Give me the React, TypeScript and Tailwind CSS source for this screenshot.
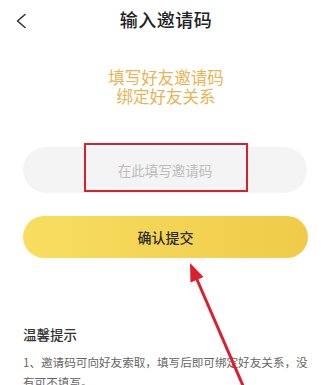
import React from 'react';

const font = { fontFamily: '"Noto Sans CJK SC", "Noto Sans", sans-serif' };

export default function App() {
  return (
    <div className="relative w-[324px] h-[385px] overflow-hidden bg-white" style={font}>
      {/* Header */}
      <div className="relative flex items-center justify-center h-[38px]">
        <button className="absolute left-[13px] top-[11px] p-0.5">
          <svg width="12" height="16" viewBox="0 0 12 16" fill="none">
            <path d="M10 1.5 L2.5 8 L10 14.5" stroke="#333" strokeWidth="1.6" strokeLinecap="round" strokeLinejoin="round" />
          </svg>
        </button>
        <h1 className="ml-[8px] text-[18px] font-medium text-[#222] tracking-[0.5px]">输入邀请码</h1>
      </div>

      {/* Intro */}
      <div className="mt-[30px] ml-[8px] text-center text-[16.5px] leading-[19px] text-[#e6b455]">
        <p>填写好友邀请码</p>
        <p>绑定好友关系</p>
      </div>

      {/* Input */}
      <div className="relative mt-[41px] ml-[23px] mr-[17px]">
        <input
          placeholder="在此填写邀请码"
          className="w-full h-[46px] rounded-full bg-[#f4f4f4] text-center text-[13.5px] text-[#333] placeholder:text-[#bdbdbd] outline-none"
          style={font}
        />
        <div className="absolute left-[61px] top-[-4px] w-[164px] h-[49px] border-[2px] border-[#d8202e] pointer-events-none" />
      </div>

      {/* Submit */}
      <button className="mt-[23px] ml-[23px] w-[285px] h-[42px] rounded-full bg-gradient-to-r from-[#f8de60] to-[#efcb48] text-[14px] font-medium text-[#2b2b2b]">
        确认提交
      </button>

      {/* Tips */}
      <div className="mt-[66px] ml-[23px] w-[290px]">
        <h2 className="text-[13.5px] font-medium text-[#333] leading-[20px]">温馨提示</h2>
        <p className="mt-[8px] text-[11.6px] leading-[20px] text-[#666]">
          1、邀请码可向好友索取，填写后即可绑定好友关系，没有可不填写。
        </p>
      </div>

      {/* Annotation arrow */}
      <svg className="absolute left-0 top-0 pointer-events-none" width="324" height="385" viewBox="0 0 324 385">
        <line x1="244" y1="388" x2="195" y2="275" stroke="#d8202e" strokeWidth="3" />
        <polygon points="190,263 203.5,277 190.5,282.5" fill="#d8202e" />
      </svg>
    </div>
  );
}
